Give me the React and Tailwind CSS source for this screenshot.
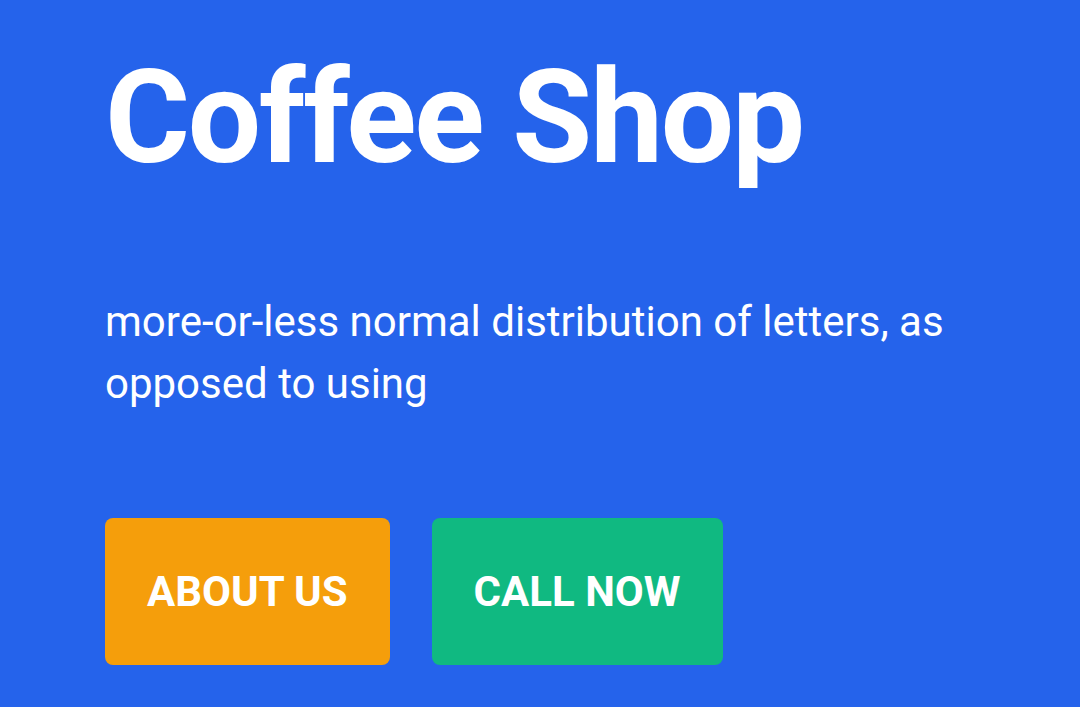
import React from "react";

const Hero = () => (
  <section className="min-h-screen w-full bg-[#2563eb] px-[105px] pt-[53px] font-['Roboto',sans-serif] text-white">
    <h1 className="text-[130px] font-bold leading-none tracking-[-2.2px]">Coffee Shop</h1>
    <p className="mt-[108px] text-[42px] leading-[62px]">
      more-or-less normal distribution of letters, as opposed to using
    </p>
    <div className="mt-[103px] flex gap-[42px]">
      <button className="rounded-lg bg-[#f59e0b] px-[42px] py-[50px] text-[42px] font-bold leading-[47px]">
        ABOUT US
      </button>
      <button className="rounded-lg bg-[#10b981] px-[42px] py-[50px] text-[42px] font-bold leading-[47px]">
        CALL NOW
      </button>
    </div>
  </section>
);

export default function App() {
  return <Hero />;
}
